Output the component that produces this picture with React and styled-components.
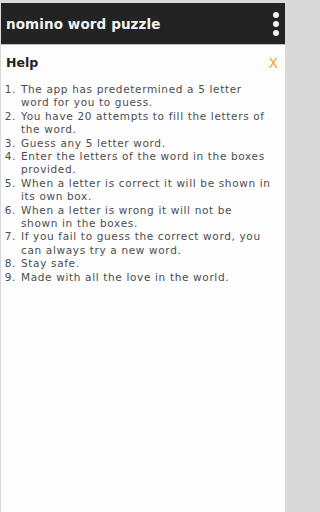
import React from "react";
import styled, { createGlobalStyle } from "styled-components";

const GlobalStyle = createGlobalStyle`
  html, body {
    margin: 0;
    padding: 0;
    background: #d9d9d9;
  }
  * {
    box-sizing: border-box;
  }
`;

const Frame = styled.div`
  width: 284px;
  height: 509px;
  margin: 3px 3px 0 1px;
  background: #fdfdfd;
  display: flex;
  flex-direction: column;
  overflow: hidden;
`;

const AppBar = styled.header`
  height: 42px;
  background: #232323;
  display: flex;
  align-items: center;
  justify-content: space-between;
  padding: 0 6px 0 5px;
  border-bottom: 1px solid #bdbdbd;
`;

const Title = styled.h1`
  margin: 0;
  font-family: "DejaVu Sans", sans-serif;
  font-weight: 700;
  font-size: 13.5px;
  color: #f4f4f4;
  letter-spacing: 0.1px;
`;

const MenuButton = styled.button`
  border: 0;
  background: none;
  padding: 0;
  display: flex;
  flex-direction: column;
  gap: 3px;
  cursor: pointer;
`;

const Dot = styled.span`
  width: 6px;
  height: 6px;
  border-radius: 50%;
  background: #f2f2f2;
`;

const PanelHead = styled.div`
  display: flex;
  align-items: center;
  justify-content: space-between;
  padding: 5px 7px 0 5px;
  height: 30px;
`;

const PanelTitle = styled.h2`
  margin: 0;
  font-family: "DejaVu Sans", sans-serif;
  font-weight: 600;
  font-size: 12.5px;
  color: #222;
`;

const Close = styled.button`
  border: 0;
  background: none;
  padding: 0;
  font-family: "DejaVu Sans", sans-serif;
  font-size: 13.5px;
  color: #f5a11c;
  cursor: pointer;
`;

const Rules = styled.ol`
  margin: 8px 0 0;
  padding: 0 2px 0 19px;
  font-family: "DejaVu Sans", sans-serif;
  font-size: 10.5px;
  line-height: 13.4px;
  letter-spacing: 0.65px;
  color: #4d4d4d;
`;

const Rule = styled.li`
  padding-left: 1px;
  white-space: nowrap;
`;

const Line = styled.span`
  display: block;
`;

// lines broken where the app breaks them
const rules = [
  ["The app has predetermined a 5 letter", "word for you to guess."],
  ["You have 20 attempts to fill the letters of", "the word."],
  ["Guess any 5 letter word."],
  ["Enter the letters of the word in the boxes", "provided."],
  ["When a letter is correct it will be shown in", "its own box."],
  ["When a letter is wrong it will not be", "shown in the boxes."],
  ["If you fail to guess the correct word, you", "can always try a new word."],
  ["Stay safe."],
  ["Made with all the love in the world."],
];

export default function App() {
  return (
    <>
      <GlobalStyle />
      <Frame>
        <AppBar>
          <Title>nomino word puzzle</Title>
          <MenuButton aria-label="menu">
            <Dot />
            <Dot />
            <Dot />
          </MenuButton>
        </AppBar>
        <PanelHead>
          <PanelTitle>Help</PanelTitle>
          <Close aria-label="close">X</Close>
        </PanelHead>
        <Rules>
          {rules.map(lines => (
            <Rule key={lines[0]}>
              {lines.map(l => (
                <Line key={l}>{l}</Line>
              ))}
            </Rule>
          ))}
        </Rules>
      </Frame>
    </>
  );
}
